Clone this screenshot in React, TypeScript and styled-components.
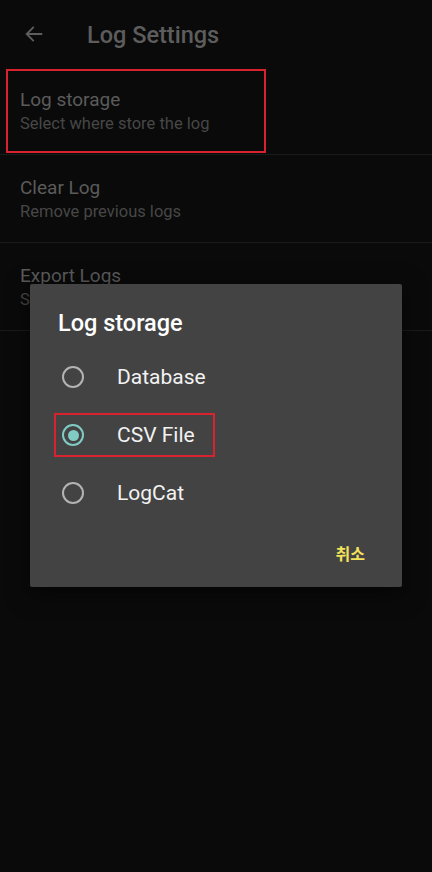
import React from "react";
import styled, { createGlobalStyle } from "styled-components";

const Global = createGlobalStyle`
  html, body { margin: 0; padding: 0; background: #0a0a0a; }
  body { font-family: Roboto, "Noto Sans", "Noto Sans CJK KR", sans-serif; }
  * { box-sizing: border-box; }
`;

const Screen = styled.div`
  position: relative;
  width: 432px;
  height: 872px;
  background: #0a0a0a;
  overflow: hidden;
`;

const Toolbar = styled.div`
  height: 67px;
  display: flex;
  align-items: center;
  padding: 2px 0 0 22px;
  gap: 41px;
`;

const BackButton = styled.div`
  width: 24px;
  height: 24px;
  margin-top: -2px;
  display: flex;
  align-items: center;
  justify-content: center;
`;

const Title = styled.div`
  font-size: 23.5px;
  font-weight: 500;
  color: #5d5d5d;
  line-height: 30px;
`;

const Row = styled.div`
  padding: 20px 20px 19px;
  border-bottom: 1px solid #1b1b1b;
  display: flex;
  flex-direction: column;
`;

const RowTitle = styled.div`
  font-size: 19px;
  line-height: 26px;
  color: #5b5b5b;
`;

const RowSub = styled.div`
  font-size: 16.5px;
  line-height: 22px;
  color: #474747;
`;

const Highlight = styled.div<{ $x: number; $y: number; $w: number; $h: number }>`
  position: absolute;
  left: ${(p) => p.$x}px;
  top: ${(p) => p.$y}px;
  width: ${(p) => p.$w}px;
  height: ${(p) => p.$h}px;
  border: 2px solid #d8222f;
  pointer-events: none;
`;

const Dialog = styled.div`
  position: absolute;
  left: 30px;
  top: 284px;
  width: 372px;
  height: 303px;
  background: #434343;
  border-radius: 2px;
  box-shadow: 0 6px 24px rgba(0, 0, 0, 0.6);
  display: flex;
  flex-direction: column;
`;

const DialogTitle = styled.div`
  padding: 24px 28px 0;
  font-size: 23.5px;
  font-weight: 500;
  line-height: 30px;
  color: #ffffff;
`;

const Options = styled.div`
  margin-top: 10px;
  display: flex;
  flex-direction: column;
`;

const Option = styled.div`
  height: 58px;
  display: flex;
  align-items: center;
  padding-left: 32px;
  gap: 33px;
`;

const Radio = styled.div<{ $checked: boolean }>`
  width: 22px;
  height: 22px;
  border-radius: 50%;
  border: 2px solid ${(p) => (p.$checked ? "#80cbc4" : "#b3b3b3")};
  display: flex;
  align-items: center;
  justify-content: center;
  &::after {
    content: "";
    display: ${(p) => (p.$checked ? "block" : "none")};
    width: 11px;
    height: 11px;
    border-radius: 50%;
    background: #80cbc4;
  }
`;

const OptionLabel = styled.div`
  font-size: 21px;
  color: #f2f2f2;
  line-height: 28px;
`;

const Footer = styled.div`
  display: flex;
  justify-content: flex-end;
  padding: 13px 29px 16px;
  margin-top: auto;
`;

const TextButton = styled.div`
  height: 36px;
  padding: 0 8px;
  display: flex;
  align-items: center;
  font-family: "Noto Sans CJK KR", sans-serif;
  font-size: 16px;
  font-weight: 700;
  color: #f3e35a;
`;

const rows = [
  { title: "Log storage", sub: "Select where store the log" },
  { title: "Clear Log", sub: "Remove previous logs" },
  { title: "Export Logs", sub: "Share logs" },
];

const options = [
  { label: "Database", checked: false },
  { label: "CSV File", checked: true },
  { label: "LogCat", checked: false },
];

export default function App() {
  return (
    <>
      <Global />
      <Screen>
        <Toolbar>
          <BackButton>
            <svg width="22" height="22" viewBox="0 0 24 24" fill="none">
              <path
                d="M20 12H4.5M11 5l-7 7 7 7"
                stroke="#5d5d5d"
                strokeWidth="2"
                strokeLinecap="square"
              />
            </svg>
          </BackButton>
          <Title>Log Settings</Title>
        </Toolbar>
        {rows.map((r) => (
          <Row key={r.title}>
            <RowTitle>{r.title}</RowTitle>
            <RowSub>{r.sub}</RowSub>
          </Row>
        ))}
        <Highlight $x={6} $y={69} $w={260} $h={84} />
        <Dialog>
          <DialogTitle>Log storage</DialogTitle>
          <Options>
            {options.map((o) => (
              <Option key={o.label}>
                <Radio $checked={o.checked} />
                <OptionLabel>{o.label}</OptionLabel>
              </Option>
            ))}
          </Options>
          <Footer>
            <TextButton>취소</TextButton>
          </Footer>
        </Dialog>
        <Highlight $x={54} $y={413} $w={161} $h={44} />
      </Screen>
    </>
  );
}
